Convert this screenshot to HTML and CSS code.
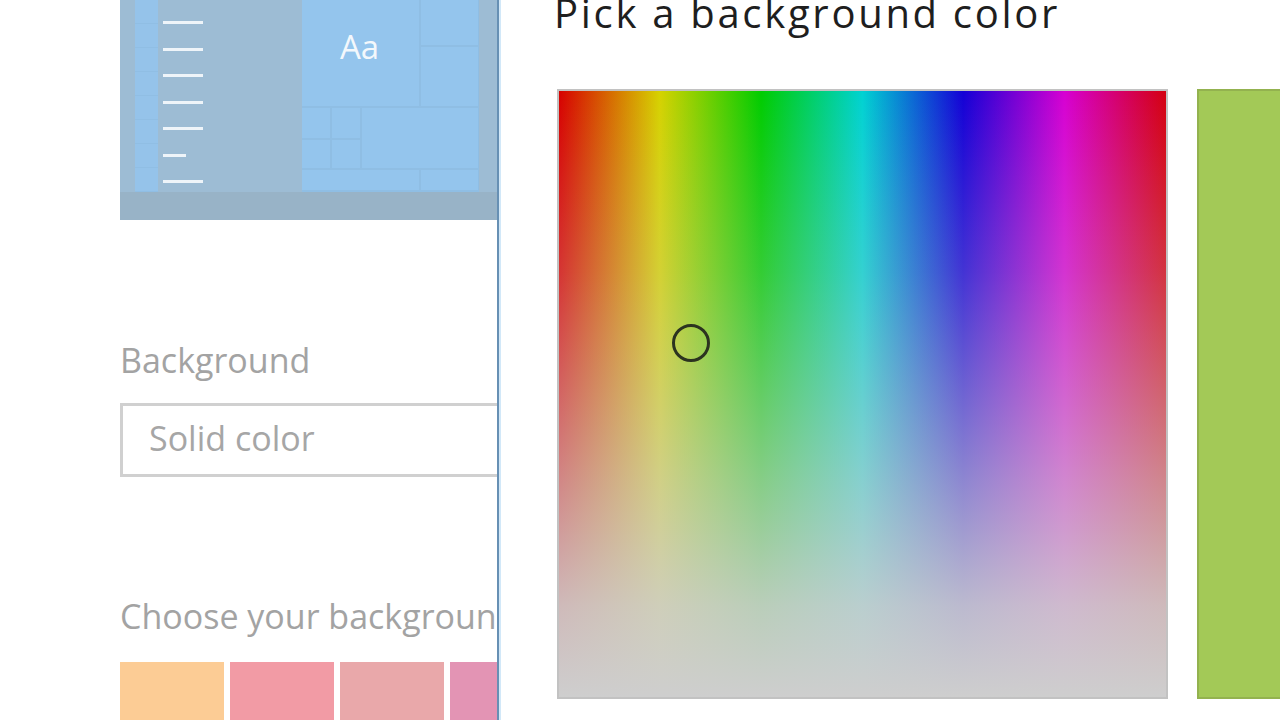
FILE: index.html
```html
<!DOCTYPE html>
<html>
<head>
<meta charset="utf-8">
<link rel="stylesheet" href="styles.css">
</head>
<body>
<div class="page">
  <div class="settings">
    <div class="preview">
      <div class="desk">
        <div class="strip">
          <div class="cell"></div><div class="cell"></div><div class="cell"></div><div class="cell"></div>
          <div class="cell"></div><div class="cell"></div><div class="cell"></div><div class="cell"></div>
        </div>
        <div class="menu">
          <div class="line"></div><div class="line"></div><div class="line"></div><div class="line"></div>
          <div class="line"></div><div class="line short"></div><div class="line"></div>
        </div>
        <div class="tiles">
          <div class="t big">Aa</div>
          <div class="t r1"></div>
          <div class="t r2"></div>
          <div class="t s1"></div>
          <div class="t s2"></div>
          <div class="t s3"></div>
          <div class="t s4"></div>
          <div class="t med"></div>
          <div class="t b1"></div>
          <div class="t b2"></div>
        </div>
      </div>
      <div class="taskbar"></div>
    </div>
    <div class="label bg-label">Background</div>
    <div class="select">Solid color</div>
    <div class="label choose">Choose your background color</div>
    <div class="swatches">
      <div class="sw sw1"></div>
      <div class="sw sw2"></div>
      <div class="sw sw3"></div>
      <div class="sw sw4"></div>
    </div>
  </div>
  <div class="divider"></div>
  <div class="dialog">
    <h1 class="title">Pick a background color</h1>
    <div class="picker">
      <div class="spectrum">
        <div class="fade"></div>
        <div class="cursor"></div>
      </div>
      <div class="current"></div>
    </div>
  </div>
</div>
</body>
</html>
```

FILE: styles.css
```css
html, body {
  margin: 0;
  padding: 0;
  background: #ffffff;
  overflow: hidden;
}
.page {
  display: flex;
  width: 1280px;
  height: 720px;
  font-family: "Open Sans", "Noto Sans", sans-serif;
}
.settings {
  width: 377px;
  padding-left: 120px;
  flex: none;
  overflow: hidden;
}
.preview {
  width: 377px;
  height: 220px;
  background: #9dbcd4;
  display: flex;
  flex-direction: column;
}
.desk {
  height: 192px;
  display: flex;
}
.strip {
  width: 23px;
  margin-left: 15px;
  background: #95c3ea;
  display: flex;
  flex-direction: column;
}
.cell {
  flex: 1;
  border-bottom: 1px solid #90bee4;
}
.menu {
  width: 40px;
  margin-left: 5px;
  padding-top: 21px;
  display: flex;
  flex-direction: column;
  gap: 23.5px;
}
.line {
  height: 3px;
  width: 40px;
  background: #eef4f9;
}
.line.short { width: 23px; }
.tiles {
  margin-left: 99px;
  width: 177px;
  display: grid;
  grid-template-columns: 28px 28px 57px 57px;
  grid-template-rows: 45px 59px 30px 28px 20px;
  gap: 2px;
  background: #8fbee4;
}
.t { background: #94c5ed; }
.big {
  grid-column: 1 / 4;
  grid-row: 1 / 3;
  color: #f3f8fc;
  font-size: 33px;
  text-align: center;
  padding-top: 25px;
  box-sizing: border-box;
  line-height: 44px;
  padding-right: 2px;
}
.r1 { grid-column: 4; grid-row: 1; }
.r2 { grid-column: 4; grid-row: 2; }
.s1 { grid-column: 1; grid-row: 3; }
.s2 { grid-column: 2; grid-row: 3; }
.s3 { grid-column: 1; grid-row: 4; }
.s4 { grid-column: 2; grid-row: 4; }
.med { grid-column: 3 / 5; grid-row: 3 / 5; }
.b1 { grid-column: 1 / 4; grid-row: 5; }
.b2 { grid-column: 4; grid-row: 5; }
.taskbar {
  height: 28px;
  background: #98b3c7;
}
.label {
  color: #a3a3a3;
  font-size: 34px;
  white-space: nowrap;
  line-height: 40px;
}
.bg-label {
  margin-top: 120px;
}
.select {
  margin-top: 23px;
  height: 74px;
  width: 400px;
  border: 3px solid #d0d0d0;
  box-sizing: border-box;
  padding-left: 26px;
  color: #a6a6a6;
  font-size: 34px;
  line-height: 64px;
  white-space: nowrap;
}
.choose {
  margin-top: 119px;
}
.swatches {
  margin-top: 26px;
  display: flex;
  gap: 6px;
}
.sw {
  flex: none;
  width: 104px;
  height: 60px;
}
.sw1 { background: #fccc95; }
.sw2 { background: #f29ba5; }
.sw3 { background: #e9a8aa; }
.sw4 { background: #e394b4; }
.divider {
  flex: none;
  width: 2px;
  background: #6790b4;
  border-right: 2px solid #d2e8f8;
}
.dialog {
  flex: 1;
  padding-left: 56px;
  overflow: hidden;
}
.title {
  margin: -13px 0 0 -3px;
  font-weight: normal;
  font-size: 40px;
  letter-spacing: 2.7px;
  line-height: 52px;
  color: #1e1e1e;
  white-space: nowrap;
}
.picker {
  margin-top: 50px;
  display: flex;
  gap: 29px;
}
.spectrum {
  flex: none;
  width: 611px;
  height: 610px;
  box-sizing: border-box;
  border: 2px solid #c2c2c2;
  position: relative;
  background: linear-gradient(to right, #d70000 0%, #d6d200 16.6%, #00cc00 33.3%, #00d2d2 50%, #1400d6 66.6%, #d600d2 83.3%, #d40010 100%);
}
.fade {
  position: absolute;
  inset: 0;
  background: linear-gradient(to bottom, rgba(206,206,206,0) 0%, rgba(206,206,206,0.25) 30%, rgba(206,206,206,0.6) 60%, rgba(206,206,206,0.9) 85%, rgba(206,206,206,1) 100%);
}
.cursor {
  position: absolute;
  left: 113px;
  top: 233px;
  width: 38px;
  height: 38px;
  box-sizing: border-box;
  border: 3px solid #2c3320;
  border-radius: 50%;
}
.current {
  flex: none;
  width: 100px;
  height: 610px;
  box-sizing: border-box;
  background: #a3c957;
  border: 2px solid #93b24f;
}
```
